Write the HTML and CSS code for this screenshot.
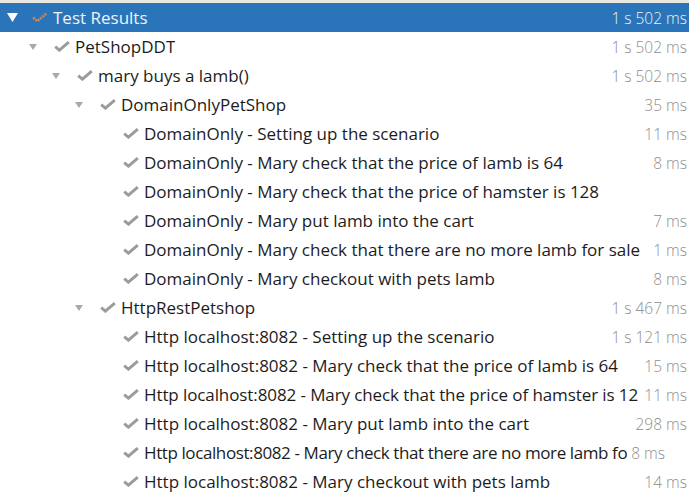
FILE: index.html
```html
<!DOCTYPE html>
<html>
<head>
<meta charset="utf-8">
<link rel="stylesheet" href="styles.css">
</head>
<body>
<div class="topline"></div>
<div class="tree">
  <div class="row selected lvl0">
    <span class="twisty"><svg width="11" height="9" viewBox="0 0 11 9"><path d="M0 0 H11 L5.5 9 Z" fill="#fff"/></svg></span>
    <span class="check"><svg width="16" height="11" viewBox="0 0 16 11"><path d="M1.2 5.6 L5.4 9.2 L14.8 1.2" fill="none" stroke="#c98a5e" stroke-width="2.6" stroke-dasharray="2 1"/></svg></span>
    <span class="label">Test Results</span>
    <span class="dur">1 s 502 ms</span>
  </div>
  <div class="row lvl1">
    <span class="twisty"><svg class="tri" width="8" height="6" viewBox="0 0 8 6"><path d="M0 0 H8 L4 6 Z"/></svg></span>
    <span class="check"><svg width="16" height="11" viewBox="0 0 16 11"><path d="M1.2 5.6 L5.4 9.2 L14.8 1.2" fill="none" stroke="#9b9b98" stroke-width="2.9"/></svg></span>
    <span class="label">PetShopDDT</span>
    <span class="dur">1 s 502 ms</span>
  </div>
  <div class="row lvl2">
    <span class="twisty"><svg class="tri" width="8" height="6" viewBox="0 0 8 6"><path d="M0 0 H8 L4 6 Z"/></svg></span>
    <span class="check"><svg width="16" height="11" viewBox="0 0 16 11"><path d="M1.2 5.6 L5.4 9.2 L14.8 1.2" fill="none" stroke="#9b9b98" stroke-width="2.9"/></svg></span>
    <span class="label">mary buys a lamb()</span>
    <span class="dur">1 s 502 ms</span>
  </div>
  <div class="row lvl3">
    <span class="twisty"><svg class="tri" width="8" height="6" viewBox="0 0 8 6"><path d="M0 0 H8 L4 6 Z"/></svg></span>
    <span class="check"><svg width="16" height="11" viewBox="0 0 16 11"><path d="M1.2 5.6 L5.4 9.2 L14.8 1.2" fill="none" stroke="#9b9b98" stroke-width="2.9"/></svg></span>
    <span class="label">DomainOnlyPetShop</span>
    <span class="dur">35 ms</span>
  </div>
  <div class="row lvl4">
    <span class="twisty"></span>
    <span class="check"><svg width="16" height="11" viewBox="0 0 16 11"><path d="M1.2 5.6 L5.4 9.2 L14.8 1.2" fill="none" stroke="#9b9b98" stroke-width="2.9"/></svg></span>
    <span class="label">DomainOnly - Setting up the scenario</span>
    <span class="dur">11 ms</span>
  </div>
  <div class="row lvl4">
    <span class="twisty"></span>
    <span class="check"><svg width="16" height="11" viewBox="0 0 16 11"><path d="M1.2 5.6 L5.4 9.2 L14.8 1.2" fill="none" stroke="#9b9b98" stroke-width="2.9"/></svg></span>
    <span class="label">DomainOnly - Mary check that the price of lamb is 64</span>
    <span class="dur">8 ms</span>
  </div>
  <div class="row lvl4">
    <span class="twisty"></span>
    <span class="check"><svg width="16" height="11" viewBox="0 0 16 11"><path d="M1.2 5.6 L5.4 9.2 L14.8 1.2" fill="none" stroke="#9b9b98" stroke-width="2.9"/></svg></span>
    <span class="label">DomainOnly - Mary check that the price of hamster is 128</span>
    <span class="dur"></span>
  </div>
  <div class="row lvl4">
    <span class="twisty"></span>
    <span class="check"><svg width="16" height="11" viewBox="0 0 16 11"><path d="M1.2 5.6 L5.4 9.2 L14.8 1.2" fill="none" stroke="#9b9b98" stroke-width="2.9"/></svg></span>
    <span class="label">DomainOnly - Mary put lamb into the cart</span>
    <span class="dur">7 ms</span>
  </div>
  <div class="row lvl4">
    <span class="twisty"></span>
    <span class="check"><svg width="16" height="11" viewBox="0 0 16 11"><path d="M1.2 5.6 L5.4 9.2 L14.8 1.2" fill="none" stroke="#9b9b98" stroke-width="2.9"/></svg></span>
    <span class="label">DomainOnly - Mary check that there are no more lamb for sale</span>
    <span class="dur">1 ms</span>
  </div>
  <div class="row lvl4">
    <span class="twisty"></span>
    <span class="check"><svg width="16" height="11" viewBox="0 0 16 11"><path d="M1.2 5.6 L5.4 9.2 L14.8 1.2" fill="none" stroke="#9b9b98" stroke-width="2.9"/></svg></span>
    <span class="label">DomainOnly - Mary checkout with pets lamb</span>
    <span class="dur">8 ms</span>
  </div>
  <div class="row lvl3">
    <span class="twisty"><svg class="tri" width="8" height="6" viewBox="0 0 8 6"><path d="M0 0 H8 L4 6 Z"/></svg></span>
    <span class="check"><svg width="16" height="11" viewBox="0 0 16 11"><path d="M1.2 5.6 L5.4 9.2 L14.8 1.2" fill="none" stroke="#9b9b98" stroke-width="2.9"/></svg></span>
    <span class="label">HttpRestPetshop</span>
    <span class="dur">1 s 467 ms</span>
  </div>
  <div class="row lvl4">
    <span class="twisty"></span>
    <span class="check"><svg width="16" height="11" viewBox="0 0 16 11"><path d="M1.2 5.6 L5.4 9.2 L14.8 1.2" fill="none" stroke="#9b9b98" stroke-width="2.9"/></svg></span>
    <span class="label">Http localhost:8082 - Setting up the scenario</span>
    <span class="dur">1 s 121 ms</span>
  </div>
  <div class="row lvl4">
    <span class="twisty"></span>
    <span class="check"><svg width="16" height="11" viewBox="0 0 16 11"><path d="M1.2 5.6 L5.4 9.2 L14.8 1.2" fill="none" stroke="#9b9b98" stroke-width="2.9"/></svg></span>
    <span class="label">Http localhost:8082 - Mary check that the price of lamb is 64</span>
    <span class="dur">15 ms</span>
  </div>
  <div class="row lvl4 tight">
    <span class="twisty"></span>
    <span class="check"><svg width="16" height="11" viewBox="0 0 16 11"><path d="M1.2 5.6 L5.4 9.2 L14.8 1.2" fill="none" stroke="#9b9b98" stroke-width="2.9"/></svg></span>
    <span class="label">Http localhost:8082 - Mary check that the price of hamster is 12</span>
    <span class="dur">11 ms</span>
  </div>
  <div class="row lvl4">
    <span class="twisty"></span>
    <span class="check"><svg width="16" height="11" viewBox="0 0 16 11"><path d="M1.2 5.6 L5.4 9.2 L14.8 1.2" fill="none" stroke="#9b9b98" stroke-width="2.9"/></svg></span>
    <span class="label">Http localhost:8082 - Mary put lamb into the cart</span>
    <span class="dur">298 ms</span>
  </div>
  <div class="row lvl4 trunc">
    <span class="twisty"></span>
    <span class="check"><svg width="16" height="11" viewBox="0 0 16 11"><path d="M1.2 5.6 L5.4 9.2 L14.8 1.2" fill="none" stroke="#9b9b98" stroke-width="2.9"/></svg></span>
    <span class="label">Http localhost:8082 - Mary check that there are no more lamb fo</span>
    <span class="dur">8 ms</span>
  </div>
  <div class="row lvl4">
    <span class="twisty"></span>
    <span class="check"><svg width="16" height="11" viewBox="0 0 16 11"><path d="M1.2 5.6 L5.4 9.2 L14.8 1.2" fill="none" stroke="#9b9b98" stroke-width="2.9"/></svg></span>
    <span class="label">Http localhost:8082 - Mary checkout with pets lamb</span>
    <span class="dur">14 ms</span>
  </div>
</div>
</body>
</html>
```
FILE: styles.css
```css
html, body {
  margin: 0;
  padding: 0;
  background: #ffffff;
  width: 689px;
  height: 504px;
  overflow: hidden;
}
body {
  font-family: "Open Sans", "Noto Sans", sans-serif;
  color: #1c1c1c;
}
.topline {
  height: 3px;
  background: #e9e9e2;
}
.tree {
  display: flex;
  flex-direction: column;
}
.row {
  display: flex;
  align-items: center;
  height: 29px;
  font-size: 17px;
  white-space: nowrap;
}
.row.selected {
  background: #2a75b9;
  color: #eef3f8;
}
.lvl0 { padding-left: 6px; }
.lvl1 { padding-left: 27px; }
.lvl2 { padding-left: 50px; }
.lvl3 { padding-left: 73px; }
.lvl4 { padding-left: 96px; }
.twisty {
  width: 12px;
  flex: none;
  display: flex;
  justify-content: center;
  align-items: center;
  margin-right: 15px;
}
.lvl0 .twisty { margin-right: 14px; }
.tri path { fill: #a9a9a7; }
.check {
  width: 16px;
  flex: none;
  display: flex;
  align-items: center;
  margin-right: 5px;
}
.label {
  flex: 0 1 auto;
  min-width: 0;
  overflow: hidden;
}
.tight .label { letter-spacing: -0.1px; }
.trunc .label { letter-spacing: -0.4px; }
.dur {
  flex: none;
  margin-left: auto;
  padding: 0 2px 0 4px;
  color: #8e8e8c;
  font-family: "Open Sans", sans-serif;
  font-weight: 300;
  font-size: 15.5px;
}
.trunc .dur { margin-left: 0; }
.selected .dur { color: #eef3f8; }
```
